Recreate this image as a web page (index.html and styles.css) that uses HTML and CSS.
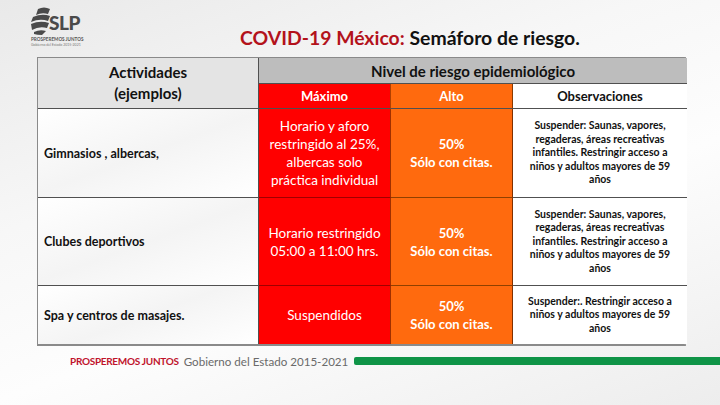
FILE: index.html
```html
<!DOCTYPE html>
<html lang="es">
<head>
<meta charset="utf-8">
<title>COVID-19 México: Semáforo de riesgo</title>
<link rel="stylesheet" href="styles.css">
</head>
<body>
<div class="slide">
  <header class="top">
    <div class="logo">
      <svg class="logo-svg" viewBox="0 0 60 40" width="60" height="40">
        <g fill="#4a4a4a">
          <path d="M9 2 Q15 -1 21 2 L19 7 Q13 5 7 8 Z"/>
          <path d="M4 10 Q13 6 21 9 L19 14 Q11 11 2 15 Z"/>
          <path d="M2 17 Q11 13 20 16 L18 21 Q10 19 3 23 Z"/>
          <path d="M5 25 Q11 22 17 24 L13 28 Q8 28 5 27 Z"/>
        </g>
        <text x="20" y="23" class="logo-slp">SLP</text>
        <text x="2" y="34" class="logo-l1">PROSPEREMOS JUNTOS</text>
        <text x="2" y="38.5" class="logo-l2">Gobierno del Estado 2015-2021</text>
      </svg>
    </div>
    <h1 class="title"><span class="title-red">COVID-19 México:</span> Semáforo de riesgo.</h1>
  </header>

  <div class="table">
    <div class="cell head-act">Actividades<br>(ejemplos)</div>
    <div class="cell head-nivel">Nivel de riesgo epidemiológico</div>
    <div class="cell head-max">Máximo</div>
    <div class="cell head-alto">Alto</div>
    <div class="cell head-obs">Observaciones</div>

    <div class="cell act">Gimnasios , albercas,</div>
    <div class="cell max">Horario y aforo<br>restringido al 25%,<br>albercas solo<br>práctica individual</div>
    <div class="cell alto">50%<br>Sólo con citas.</div>
    <div class="cell obs">Suspender: Saunas, vapores,<br>regaderas, áreas recreativas<br>infantiles. Restringir acceso a<br>niños y adultos mayores de 59<br>años</div>

    <div class="cell act">Clubes deportivos</div>
    <div class="cell max">Horario restringido<br>05:00 a 11:00 hrs.</div>
    <div class="cell alto">50%<br>Sólo con citas.</div>
    <div class="cell obs">Suspender: Saunas, vapores,<br>regaderas, áreas recreativas<br>infantiles. Restringir acceso a<br>niños y adultos mayores de 59<br>años</div>

    <div class="cell act">Spa y centros de masajes.</div>
    <div class="cell max">Suspendidos</div>
    <div class="cell alto">50%<br>Sólo con citas.</div>
    <div class="cell obs">Suspender:. Restringir acceso a<br>niños y adultos mayores de 59<br>años</div>
  </div>

  <footer class="foot">
    <span class="foot-red">PROSPEREMOS JUNTOS</span>
    <span class="foot-gray">Gobierno del Estado 2015-2021</span>
    <span class="foot-bar"></span>
  </footer>
</div>
</body>
</html>
```

FILE: styles.css
```css
html, body {
  margin: 0;
  padding: 0;
}
body {
  width: 720px;
  height: 405px;
  overflow: hidden;
  font-family: "Lato", "Open Sans", sans-serif;
}
.slide {
  width: 720px;
  height: 405px;
  background: linear-gradient(160deg, #e9e9e9 0%, #f7f7f7 35%, #fdfdfd 60%, #ededed 100%);
  display: flex;
  flex-direction: column;
}
.top {
  height: 57px;
  display: flex;
  align-items: flex-start;
}
.logo {
  margin-left: 29px;
  margin-top: 7px;
  width: 60px;
  height: 40px;
}
.logo-svg {
  display: block;
}
.logo-slp {
  font-family: "Lato", sans-serif;
  font-weight: 900;
  font-size: 19px;
  fill: #4a4a4a;
  letter-spacing: -0.5px;
}
.logo-l1 {
  font-family: "Lato", sans-serif;
  font-size: 4.6px;
  font-weight: 700;
  fill: #555;
}
.logo-l2 {
  font-family: "Lato", sans-serif;
  font-size: 3.5px;
  fill: #777;
}
.title {
  margin: 26px 0 0 151px;
  font-size: 19.4px;
  font-weight: 700;
  color: #111;
  line-height: 24px;
  white-space: nowrap;
}
.title-red {
  color: #b3121b;
}
.table {
  margin-left: 37px;
  width: 649px;
  display: grid;
  grid-template-columns: 221px 132px 122px 174px;
  grid-template-rows: 26px 25px 89px 88px 58px;
  border: 1px solid #8a8a8a;
  border-bottom: 2px solid #8a8a8a;
  border-right: 2px solid #9a9a9a;
  box-sizing: border-box;
  background: #fff;
}
.cell {
  display: flex;
  align-items: center;
  justify-content: center;
  text-align: center;
  box-sizing: border-box;
  border-right: 1px solid #505050;
  border-bottom: 1px solid #505050;
  font-weight: 700;
}
.head-act {
  grid-row: 1 / 3;
  background: #e4e4e4;
  font-size: 15px;
  line-height: 21px;
  color: #111;
}
.head-nivel {
  grid-column: 2 / 5;
  background: #bdbdbd;
  font-size: 15px;
  color: #111;
  border-right: none;
}
.head-max {
  background: #ff0000;
  color: #fff;
  font-size: 13px;
  border-right-color: #b04000;
}
.head-alto {
  background: #ff6a0e;
  color: #fff;
  font-size: 13px;
  border-right-color: #8a3a00;
}
.head-obs {
  background: #fff;
  color: #111;
  font-size: 13px;
  border-right: none;
}
.act {
  justify-content: flex-start;
  padding-left: 6px;
  font-size: 12.5px;
  color: #111;
  background: linear-gradient(160deg, #ffffff 0%, #f4f4f4 50%, #ffffff 100%);
}
.max {
  background: #ff0000;
  color: #fff;
  font-weight: 400;
  font-size: 13.5px;
  line-height: 18px;
  border-right-color: #a03000;
  border-bottom-color: #a00000;
}
.alto {
  background: #ff6a0e;
  color: #fff;
  font-size: 13px;
  line-height: 18px;
  border-right-color: #803000;
  border-bottom-color: #904000;
}
.obs {
  background: #fff;
  color: #111;
  font-size: 10.5px;
  line-height: 13.5px;
  border-right: none;
}
.table .cell:nth-last-child(-n+4) {
  border-bottom: none;
}
.foot {
  margin-top: 7px;
  display: flex;
  align-items: center;
  height: 16px;
}
.foot-red {
  margin-left: 70px;
  color: #c0142c;
  font-weight: 700;
  font-size: 10px;
  letter-spacing: -0.3px;
}
.foot-gray {
  margin-left: 5px;
  color: #6a6a6a;
  font-size: 11.6px;
}
.foot-bar {
  margin-left: 6px;
  flex: 1;
  height: 8px;
  background: #0f9447;
  border-top-left-radius: 2px;
  border-bottom-left-radius: 2px;
}
```
